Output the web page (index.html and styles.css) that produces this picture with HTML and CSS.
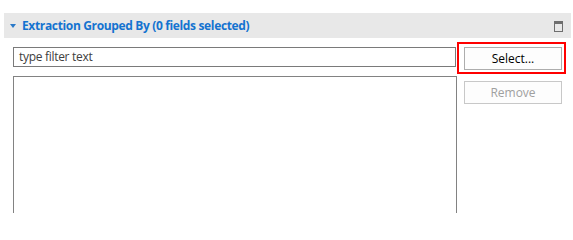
FILE: index.html
```html
<!DOCTYPE html>
<html>
<head>
<meta charset="utf-8">
<link rel="stylesheet" href="styles.css">
</head>
<body>
<div class="section">
  <div class="header">
    <span class="twisty"></span>
    <span class="title">Extraction Grouped By (0 fields selected)</span>
    <span class="max-icon"></span>
  </div>
  <div class="body">
    <div class="left">
      <div class="filter">type filter text</div>
      <div class="list"></div>
    </div>
    <div class="right">
      <div class="btn">Select...</div>
      <div class="btn disabled">Remove</div>
      <div class="highlight"></div>
    </div>
  </div>
</div>
</body>
</html>
```
FILE: styles.css
```css
html, body {
  margin: 0;
  padding: 0;
  background: #ffffff;
  overflow: hidden;
}
body {
  font-family: "Open Sans", "Noto Sans", sans-serif;
  font-size: 12px;
  color: #1e1e1e;
  width: 573px;
  height: 213px;
}
.section {
  padding: 13px 2px 0 4px;
}
.header {
  height: 25px;
  background: #e8e8e8;
  display: flex;
  align-items: center;
  padding-left: 6px;
  padding-right: 8px;
}
.twisty {
  width: 0;
  height: 0;
  border-left: 3.5px solid transparent;
  border-right: 3.5px solid transparent;
  border-top: 4px solid #2a79c8;
  margin-top: 1px;
  margin-right: 6px;
}
.title {
  font-weight: bold;
  color: #1473d0;
  font-size: 12px;
  letter-spacing: -0.35px;
  flex: 1;
}
.max-icon {
  width: 7px;
  height: 7px;
  border: 1px solid #6e6e6e;
  border-top-width: 3px;
  margin-top: 1px;
}
.body {
  display: flex;
  padding-left: 9px;
}
.left {
  width: 444px;
  display: flex;
  flex-direction: column;
}
.filter {
  margin-top: 9px;
  height: 18px;
  border: 1px solid #7a7a7a;
  line-height: 18px;
  padding-left: 5px;
  box-sizing: content-box;
  color: #404040;
  width: 436px;
  letter-spacing: -0.3px;
}
.list {
  margin-top: 9px;
  height: 150px;
  border: 1px solid #828282;
  width: 442px;
}
.right {
  position: relative;
  padding-left: 7px;
  padding-top: 9px;
  display: flex;
  flex-direction: column;
  gap: 11px;
}
.btn {
  width: 96px;
  height: 21px;
  border: 1px solid #adadad;
  background: #fdfdfd;
  text-align: center;
  line-height: 21px;
  color: #000;
}
.btn.disabled {
  color: #a0a0a0;
  border-color: #c8c8c8;
}
.highlight {
  position: absolute;
  left: 0;
  top: 4px;
  width: 105px;
  height: 28px;
  border: 2px solid #ff0000;
}
```
